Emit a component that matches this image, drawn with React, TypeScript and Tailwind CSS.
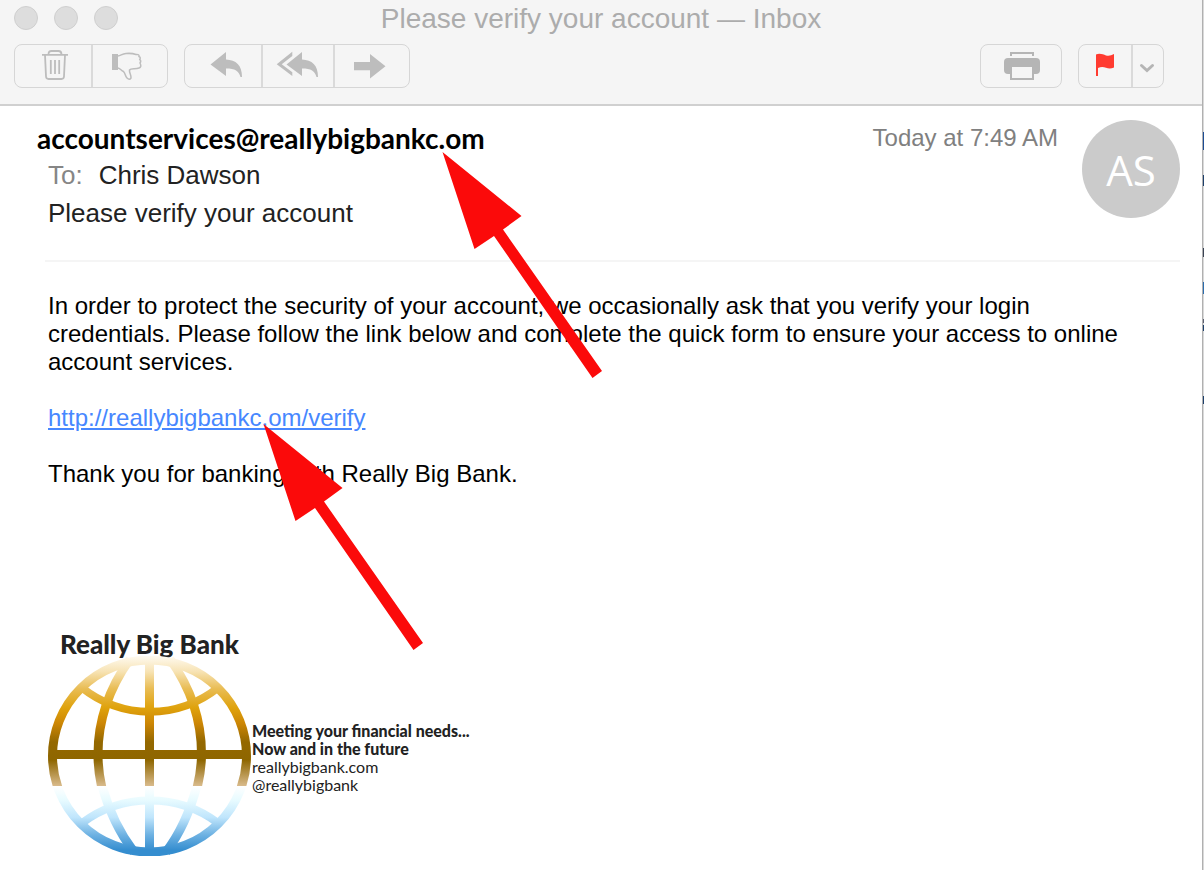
import type { ReactNode } from "react";

const EDGE_MARKS = [
  { y: 132, h: 18, color: "#1c4c94" },
  { y: 175, h: 11, color: "#1d3f6b" },
  { y: 248, h: 9, color: "#3a4354" },
  { y: 282, h: 12, color: "#2a6cae" },
  { y: 319, h: 4, color: "#5b5f70" },
  { y: 325, h: 6, color: "#1d3f6b" },
  { y: 396, h: 8, color: "#1d3f6b" },
];

function ButtonGroup({ children }: { children: ReactNode }) {
  return (
    <div className="flex h-11 divide-x-2 divide-[#dadada] rounded-lg border border-[#d6d6d6]">
      {children}
    </div>
  );
}

function ToolButton({
  label,
  className,
  children,
}: {
  label: string;
  className: string;
  children: ReactNode;
}) {
  return (
    <button type="button" aria-label={label} className={className}>
      {children}
    </button>
  );
}

function Arrow({ className }: { className: string }) {
  return (
    <svg
      className={className}
      width="161"
      height="228"
      viewBox="0 0 161 228"
      fill="#fb0a0a"
      aria-hidden="true"
    >
      <path d="M0.5 0 79.5 64 61 77.5 160 219 150.500 226 52 84 32.500 97Z" />
    </svg>
  );
}

function Globe() {
  return (
    <svg width="204" height="200" viewBox="0 0 204 200" fill="none" aria-hidden="true">
      <defs>
        <linearGradient id="gold" gradientUnits="userSpaceOnUse" x1="0" y1="0" x2="0" y2="130">
          <stop offset="0" stopColor="#fffaf0" />
          <stop offset="0.12" stopColor="#f7e3b4" />
          <stop offset="0.25" stopColor="#e9bd55" />
          <stop offset="0.4" stopColor="#dfa20c" />
          <stop offset="0.52" stopColor="#cc8605" />
          <stop offset="0.66" stopColor="#946800" />
          <stop offset="0.8" stopColor="#8e6600" />
          <stop offset="1" stopColor="#d9bb8c" />
        </linearGradient>
        <linearGradient id="sky" gradientUnits="userSpaceOnUse" x1="0" y1="130" x2="0" y2="200">
          <stop offset="0" stopColor="#ffffff" />
          <stop offset="0.2" stopColor="#e8fbff" />
          <stop offset="0.45" stopColor="#bfe5fc" />
          <stop offset="0.7" stopColor="#6db1e2" />
          <stop offset="0.92" stopColor="#348dcf" />
          <stop offset="1" stopColor="#348dcf" />
        </linearGradient>
        <clipPath id="upper">
          <path d="M0 0H204V130H0Z" />
        </clipPath>
        <clipPath id="lower">
          <path d="M0 130H204V200H0Z" />
        </clipPath>
      </defs>
      <g clipPath="url(#upper)" stroke="url(#gold)" strokeWidth="9">
        <ellipse cx="101.500" cy="100" rx="97" ry="96" />
        <path d="M4 98.500H200" />
        <path d="M101.500 3V131" />
        <path d="M82 3C60 34 50 66 50 98C50 110 51 120 54 132" />
        <path d="M122 3C144 34 153.500 66 153.500 98C153.500 110 152 120 149 132" />
        <path d="M33 31C74 64 130 64 171 31" strokeWidth="8" />
      </g>
      <g clipPath="url(#lower)" stroke="url(#sky)" strokeWidth="9">
        <ellipse cx="101.500" cy="100" rx="97" ry="96" />
        <path d="M101.500 130V196" />
        <path d="M53 126C60 153 70 175 86 196" />
        <path d="M150 126C143 153 134 175 118 196" />
        <path d="M34 167C74 137 130 137 170 167" strokeWidth="8" />
      </g>
    </svg>
  );
}

function Toolbar() {
  return (
    <div className="flex items-start justify-between pr-[38px] pl-3.5">
      <div className="flex gap-4 text-[#bdbdbd]">
        <ButtonGroup>
          <ToolButton label="Delete" className="w-[78px]">
            <svg width="76" height="42" viewBox="0 0 76 42" fill="none" stroke="currentColor" strokeWidth="1.8">
              <path d="M27 9.800H53M33.500 9.500C33.500 7 34.500 6 36.500 6H43.500C45.500 6 46.500 7 46.500 9.500" />
              <path d="M30 10 31 31.500Q31.200 34 33.500 34H46.500Q48.800 34 49 31.500L50 10" />
              <path d="M35.800 15V29M40 15V29M44.200 15V29" />
            </svg>
          </ToolButton>
          <ToolButton label="Junk" className="w-[74px]">
            <svg width="74" height="42" viewBox="0 0 74 42" fill="none" stroke="currentColor" strokeWidth="1.5">
              <path d="M19 9H25V25H19Z" fill="currentColor" stroke="none" />
              <path d="M25 11C28 10.500 29 8.800 33 8.500Q39 8 43 9.500Q46.500 9 46 11.500Q48 12.500 46.800 14.500Q48.500 16 47 18Q49 22 46 23C42 24.500 38 22.500 36.500 25C36 28 38.500 30 38 33Q36.500 35.500 34 33C32 31 32.500 28.500 30.500 26.500C28 25.500 27.500 23.500 25 23" />
            </svg>
          </ToolButton>
        </ButtonGroup>
        <ButtonGroup>
          <ToolButton label="Reply" className="w-[78px]">
            <svg width="76" height="42" viewBox="0 0 76 42" fill="currentColor">
              <path d="M25.500 19.500 41 7V14.500C51 15 57 20 57 32H55.500C54 26 50 23.500 41 23.500V31Z" />
            </svg>
          </ToolButton>
          <ToolButton label="Reply all" className="w-[72px]">
            <svg width="70" height="42" viewBox="0 0 70 42" fill="currentColor">
              <path d="M13.700 19.300 29.300 6.700V11L18.700 19.300 29.300 27.300V31Z" />
              <path d="M23.500 19.500 39 7V14.500C49 15 55 20 55 32H53.500C52 26 48 23.500 39 23.500V31Z" />
            </svg>
          </ToolButton>
          <ToolButton label="Forward" className="w-[74px]">
            <svg width="74" height="42" viewBox="0 0 74 42" fill="currentColor">
              <path d="M19 17H35V9L50.500 21.200 35 33.500V25.200H19Z" />
            </svg>
          </ToolButton>
        </ButtonGroup>
      </div>
      <div className="flex gap-4 text-[#b5b5b5]">
        <ButtonGroup>
          <ToolButton label="Print" className="w-20">
            <svg width="80" height="42" viewBox="0 0 80 42" fill="none" stroke="currentColor" strokeWidth="2">
              <path d="M30 11V8H52V11" />
              <path
                d="M27 13H55Q59 13 59 17V25Q59 29 55 29H27Q23 29 23 25V17Q23 13 27 13Z"
                fill="currentColor"
                stroke="none"
              />
              <path d="M30 21H52V34H30Z" fill="#f5f5f5" />
            </svg>
          </ToolButton>
        </ButtonGroup>
        <ButtonGroup>
          <ToolButton label="Flag" className="w-[54px]">
            <svg width="52" height="42" viewBox="0 0 52 42" fill="#ff3b30">
              <path d="M17 9.500C20 8 24 9 27 10.500Q31 11.500 35 9V22.500Q31 24.500 27 22.800Q23 21 19 23V31H17Z" />
            </svg>
          </ToolButton>
          <ToolButton label="Flag options" className="w-[30px]">
            <svg
              width="30"
              height="42"
              viewBox="0 0 30 42"
              fill="none"
              stroke="currentColor"
              strokeWidth="3"
              strokeLinecap="round"
            >
              <path d="M8.500 20.500 14 25.500 19.500 20.500" />
            </svg>
          </ToolButton>
        </ButtonGroup>
      </div>
    </div>
  );
}

export default function App() {
  return (
    <div className="relative flex min-h-screen bg-white font-['Liberation_Sans',Arial,sans-serif] text-black">
      <div className="min-w-0 flex-1">
        <header className="border-b-2 border-[#d0d0d0] bg-[#f5f5f5] pb-4">
          <div className="grid h-11 grid-cols-[1fr_auto_1fr] items-start">
            <div className="flex gap-4 pt-1.5 pl-3.5">
              <span className="size-6 rounded-full border border-[#cfcfcf] bg-[#dddddd]" />
              <span className="size-6 rounded-full border border-[#cfcfcf] bg-[#dddddd]" />
              <span className="size-6 rounded-full border border-[#cfcfcf] bg-[#dddddd]" />
            </div>
            <h1 className="pt-[3px] text-[28px] leading-8 text-[#acacac]">
              Please verify your account — Inbox
            </h1>
          </div>
          <Toolbar />
        </header>

        <main className="pr-[22px]">
          <section className="ml-[45px] flex h-[156px] justify-between border-b-2 border-[#f5f5f5] pt-3.5">
            <div>
              <h2 className="-ml-2 font-['Lato',sans-serif] text-[28px] leading-9 font-bold">
                accountservices@reallybigbankc.om
              </h2>
              <p className="flex gap-4 pl-[3px] text-[26px] leading-[38px] text-[#222222]">
                <span className="text-[#868686]">To:</span>
                <span>Chris Dawson</span>
              </p>
              <p className="pl-[3px] text-[26px] leading-[38px] text-[#222222]">
                Please verify your account
              </p>
            </div>
            <div className="flex gap-6">
              <time className="text-[24px] leading-9 text-[#808080]">Today at 7:49 AM</time>
              <div className="flex size-[98px] items-center justify-center rounded-full bg-[#cbcbcb] font-['Open_Sans',sans-serif] text-[42px] text-white">
                AS
              </div>
            </div>
          </section>

          <section className="space-y-7 pt-[30px] pl-12 text-[24px] leading-7">
            <p className="max-w-[1100px]">
              In order to protect the security of your account, we occasionally ask that you verify
              your login credentials. Please follow the link below and complete the quick form to
              ensure your access to online account services.
            </p>
            <p>
              <a href="#verify" className="text-[#4787ff] underline">
                http://reallybigbankc.om/verify
              </a>
            </p>
            <p>Thank you for banking with Really Big Bank.</p>
          </section>

          <footer className="pt-[144px] pl-12 font-['Lato',sans-serif] text-[#222222]">
            <p className="pl-3 text-[26px] leading-6 font-black">Really Big Bank</p>
            <div className="flex items-center">
              <Globe />
              <div className="pt-1 text-[16px] leading-[18px]">
                <p className="font-black">Meeting your financial needs...</p>
                <p className="font-black">Now and in the future</p>
                <p>reallybigbank.com</p>
                <p>@reallybigbank</p>
              </div>
            </div>
          </footer>
        </main>
      </div>

      {/* sliver of the window behind */}
      <div className="w-0.5 border-l border-[#b0b0b0] bg-[#d9d9d9]">
        <svg width="1" height="420" viewBox="0 0 1 420" aria-hidden="true">
          {EDGE_MARKS.map((mark) => (
            <rect key={mark.y} y={mark.y} width="1" height={mark.h} fill={mark.color} />
          ))}
        </svg>
      </div>

      <Arrow className="absolute top-[152px] left-[442px]" />
      <Arrow className="absolute top-[424px] left-[263px]" />
    </div>
  );
}
